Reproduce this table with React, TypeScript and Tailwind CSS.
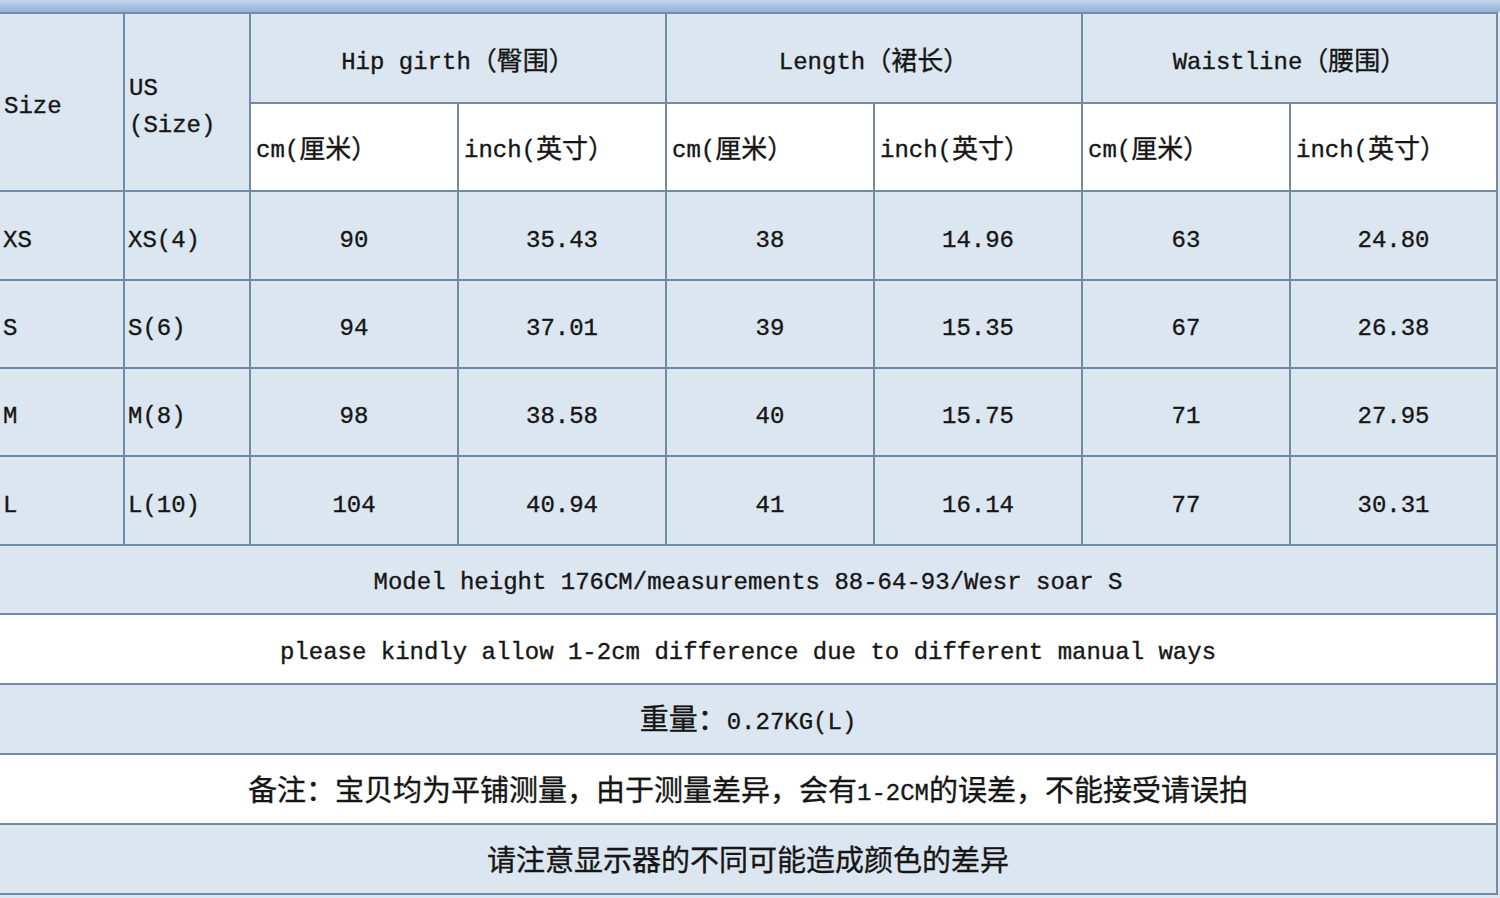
import React from "react";

const font = { fontFamily: '"Liberation Mono", "Noto Sans CJK SC", monospace' };

const rows = [
  ["XS", "XS(4)", "90", "35.43", "38", "14.96", "63", "24.80"],
  ["S", "S(6)", "94", "37.01", "39", "15.35", "67", "26.38"],
  ["M", "M(8)", "98", "38.58", "40", "15.75", "71", "27.95"],
  ["L", "L(10)", "104", "40.94", "41", "16.14", "77", "30.31"],
];

const subHeads: [string, string][] = [
  ["cm(", "厘米）"],
  ["inch(", "英寸）"],
  ["cm(", "厘米）"],
  ["inch(", "英寸）"],
  ["cm(", "厘米）"],
  ["inch(", "英寸）"],
];

export default function App() {
  const base = "text-[#161616] text-[24px] flex items-center [-webkit-text-stroke:0.35px_#161616]";
  const cellBlue = `bg-[#dce6f1] ${base}`;
  const cellWhite = `bg-white ${base}`;
  return (
    <div className="w-[1500px] h-[898px] overflow-hidden bg-[#dce6f1] [text-spacing-trim:space-all]" style={font}>
      <div className="h-[12px] bg-gradient-to-b from-[#c3d6ee] to-[#94b1d7]" />
      <div className="w-[1498px] bg-[#718aa6] pt-[2px] pr-[2px] pb-[2px]">
        <div
          className="grid gap-[2px]"
          style={{
            gridTemplateColumns: "123px 124px 206px 206px 206px 206px 206px 205px",
            gridTemplateRows: "88px 86px 87px 86px 86px 87px 67px 68px 68px 68px 68px",
          }}
        >
          <div className={`${cellBlue} row-span-2 pl-[4px] pt-[10px]`}>Size</div>
          <div className={`${cellBlue} row-span-2 pl-[4px] pt-[10px] leading-[37px]`}>
            <div>
              US
              <br />
              (Size)
            </div>
          </div>
          <div className={`${cellBlue} col-span-2 justify-center pt-[10px]`}>
            Hip girth<span className="text-[26px]">（臀围）</span>
          </div>
          <div className={`${cellBlue} col-span-2 justify-center pt-[10px]`}>
            Length<span className="text-[26px]">（裙长）</span>
          </div>
          <div className={`${cellBlue} col-span-2 justify-center pt-[10px]`}>
            Waistline<span className="text-[26px]">（腰围）</span>
          </div>
          {subHeads.map(([a, b], i) => (
            <div key={i} className={`${cellWhite} pl-[5px] pt-[8px]`}>
              {a}
              <span className="text-[26px]">{b}</span>
            </div>
          ))}
          {rows.map((r, ri) =>
            r.map((v, ci) => (
              <div
                key={`${ri}-${ci}`}
                className={`${cellBlue} pt-[10px] ${ci < 2 ? "pl-[3px]" : "justify-center"}`}
              >
                {v}
              </div>
            ))
          )}
          <div className={`${cellBlue} col-span-8 justify-center pt-[6px]`}>
            Model height 176CM/measurements 88-64-93/Wesr soar S
          </div>
          <div className={`${cellWhite} col-span-8 justify-center pt-[8px]`}>
            please kindly allow 1-2cm difference due to different manual ways
          </div>
          <div className={`${cellBlue} col-span-8 justify-center pt-[8px]`}>
            <span className="text-[29px]">重量：</span>0.27KG(L)
          </div>
          <div className={`${cellWhite} col-span-8 justify-center pt-[10px]`}>
            <span className="text-[29px]">备注：宝贝均为平铺测量，由于测量差异，会有</span>
            1-2CM
            <span className="text-[29px]">的误差，不能接受请误拍</span>
          </div>
          <div className={`${cellBlue} col-span-8 justify-center pt-[10px]`}>
            <span className="text-[29px]">请注意显示器的不同可能造成颜色的差异</span>
          </div>
        </div>
      </div>
    </div>
  );
}
